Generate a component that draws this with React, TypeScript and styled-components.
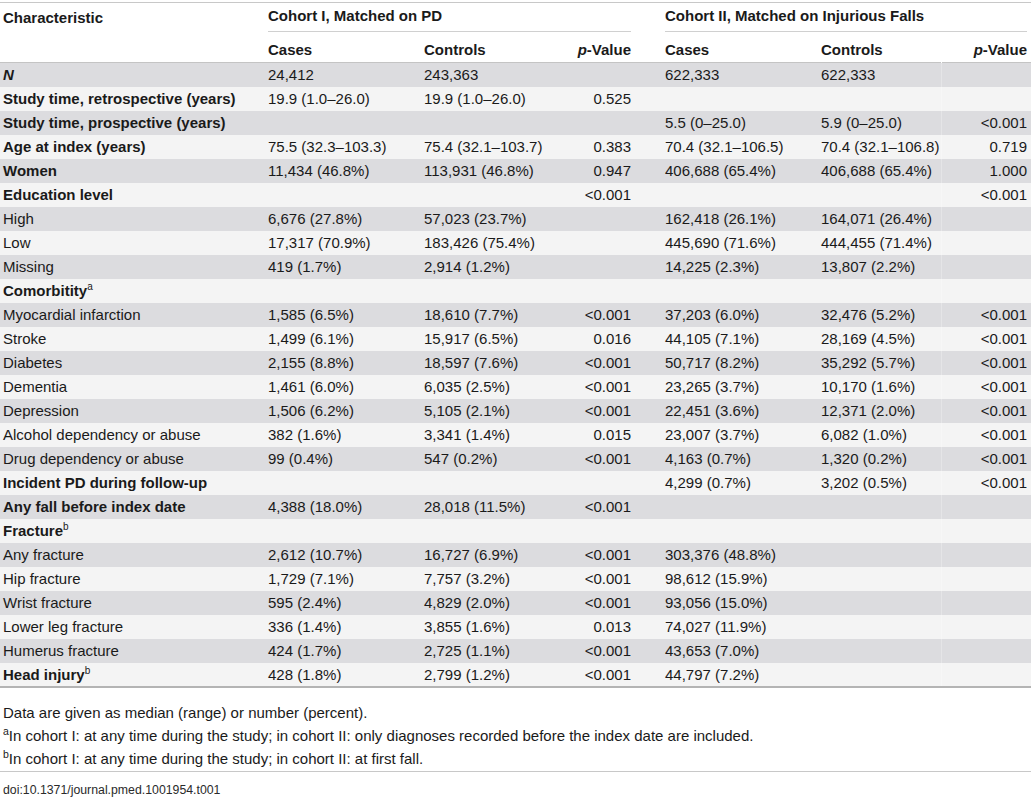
import React from "react";
import styled, { createGlobalStyle } from "styled-components";

type Row = {
  label: string;
  sup?: string;
  bold?: boolean;
  italic?: boolean;
  v: string[];
};

const rows: Row[] = [
  { label: "N", bold: true, italic: true, v: ["24,412", "243,363", "", "622,333", "622,333", ""] },
  { label: "Study time, retrospective (years)", bold: true, v: ["19.9 (1.0–26.0)", "19.9 (1.0–26.0)", "0.525", "", "", ""] },
  { label: "Study time, prospective (years)", bold: true, v: ["", "", "", "5.5 (0–25.0)", "5.9 (0–25.0)", "<0.001"] },
  { label: "Age at index (years)", bold: true, v: ["75.5 (32.3–103.3)", "75.4 (32.1–103.7)", "0.383", "70.4 (32.1–106.5)", "70.4 (32.1–106.8)", "0.719"] },
  { label: "Women", bold: true, v: ["11,434 (46.8%)", "113,931 (46.8%)", "0.947", "406,688 (65.4%)", "406,688 (65.4%)", "1.000"] },
  { label: "Education level", bold: true, v: ["", "", "<0.001", "", "", "<0.001"] },
  { label: "High", v: ["6,676 (27.8%)", "57,023 (23.7%)", "", "162,418 (26.1%)", "164,071 (26.4%)", ""] },
  { label: "Low", v: ["17,317 (70.9%)", "183,426 (75.4%)", "", "445,690 (71.6%)", "444,455 (71.4%)", ""] },
  { label: "Missing", v: ["419 (1.7%)", "2,914 (1.2%)", "", "14,225 (2.3%)", "13,807 (2.2%)", ""] },
  { label: "Comorbitity", sup: "a", bold: true, v: ["", "", "", "", "", ""] },
  { label: "Myocardial infarction", v: ["1,585 (6.5%)", "18,610 (7.7%)", "<0.001", "37,203 (6.0%)", "32,476 (5.2%)", "<0.001"] },
  { label: "Stroke", v: ["1,499 (6.1%)", "15,917 (6.5%)", "0.016", "44,105 (7.1%)", "28,169 (4.5%)", "<0.001"] },
  { label: "Diabetes", v: ["2,155 (8.8%)", "18,597 (7.6%)", "<0.001", "50,717 (8.2%)", "35,292 (5.7%)", "<0.001"] },
  { label: "Dementia", v: ["1,461 (6.0%)", "6,035 (2.5%)", "<0.001", "23,265 (3.7%)", "10,170 (1.6%)", "<0.001"] },
  { label: "Depression", v: ["1,506 (6.2%)", "5,105 (2.1%)", "<0.001", "22,451 (3.6%)", "12,371 (2.0%)", "<0.001"] },
  { label: "Alcohol dependency or abuse", v: ["382 (1.6%)", "3,341 (1.4%)", "0.015", "23,007 (3.7%)", "6,082 (1.0%)", "<0.001"] },
  { label: "Drug dependency or abuse", v: ["99 (0.4%)", "547 (0.2%)", "<0.001", "4,163 (0.7%)", "1,320 (0.2%)", "<0.001"] },
  { label: "Incident PD during follow-up", bold: true, v: ["", "", "", "4,299 (0.7%)", "3,202 (0.5%)", "<0.001"] },
  { label: "Any fall before index date", bold: true, v: ["4,388 (18.0%)", "28,018 (11.5%)", "<0.001", "", "", ""] },
  { label: "Fracture", sup: "b", bold: true, v: ["", "", "", "", "", ""] },
  { label: "Any fracture", v: ["2,612 (10.7%)", "16,727 (6.9%)", "<0.001", "303,376 (48.8%)", "", ""] },
  { label: "Hip fracture", v: ["1,729 (7.1%)", "7,757 (3.2%)", "<0.001", "98,612 (15.9%)", "", ""] },
  { label: "Wrist fracture", v: ["595 (2.4%)", "4,829 (2.0%)", "<0.001", "93,056 (15.0%)", "", ""] },
  { label: "Lower leg fracture", v: ["336 (1.4%)", "3,855 (1.6%)", "0.013", "74,027 (11.9%)", "", ""] },
  { label: "Humerus fracture", v: ["424 (1.7%)", "2,725 (1.1%)", "<0.001", "43,653 (7.0%)", "", ""] },
  { label: "Head injury", sup: "b", bold: true, v: ["428 (1.8%)", "2,799 (1.2%)", "<0.001", "44,797 (7.2%)", "", ""] },
];

const App = () => {
  return (
    <Page>
      <GlobalStyle />
      <Table>
        <colgroup>
          <col style={{ width: 265 }} />
          <col style={{ width: 156 }} />
          <col style={{ width: 139 }} />
          <col style={{ width: 75 }} />
          <col style={{ width: 183 }} />
          <col style={{ width: 123 }} />
          <col style={{ width: 90 }} />
        </colgroup>
        <thead>
          <TopRow>
            <HeadCell>Characteristic</HeadCell>
            <HeadCell colSpan={3} $bottom>
              <SpanTitle>Cohort I, Matched on PD</SpanTitle>
            </HeadCell>
            <HeadCell colSpan={3} $second $bottom>
              <SpanTitle>Cohort II, Matched on Injurious Falls</SpanTitle>
            </HeadCell>
          </TopRow>
          <SubRow>
            <HeadCell />
            <HeadCell>Cases</HeadCell>
            <HeadCell>Controls</HeadCell>
            <HeadCell $right>
              <i>p</i>-Value
            </HeadCell>
            <HeadCell $second>Cases</HeadCell>
            <HeadCell>Controls</HeadCell>
            <HeadCell $right>
              <i>p</i>-Value
            </HeadCell>
          </SubRow>
        </thead>
        <tbody>
          {rows.map((r, i) => (
            <DataRow key={r.label} $odd={i % 2 === 1}>
              <LabelCell $bold={r.bold} $italic={r.italic}>
                {r.label}
                {r.sup && <Sup>{r.sup}</Sup>}
              </LabelCell>
              <Cell>{r.v[0]}</Cell>
              <Cell>{r.v[1]}</Cell>
              <Cell $right>{r.v[2]}</Cell>
              <Cell $second>{r.v[3]}</Cell>
              <Cell>{r.v[4]}</Cell>
              <Cell $right $edge>{r.v[5]}</Cell>
            </DataRow>
          ))}
        </tbody>
      </Table>
      <Notes>
        <Note>Data are given as median (range) or number (percent).</Note>
        <Note>
          <NoteSup>a</NoteSup>In cohort I: at any time during the study; in cohort II: only diagnoses recorded before the index date are included.
        </Note>
        <Note>
          <NoteSup>b</NoteSup>In cohort I: at any time during the study; in cohort II: at first fall.
        </Note>
      </Notes>
      <Doi>doi:10.1371/journal.pmed.1001954.t001</Doi>
    </Page>
  );
};

export default App;

const GlobalStyle = createGlobalStyle`
  body {
    margin: 0;
    background: #ffffff;
    font-family: "Liberation Sans", Arial, sans-serif;
    color: #1a1a1a;
  }
`;

const Page = styled.div`
  width: 1031px;
  padding-top: 2px;
`;

const Table = styled.table`
  width: 1031px;
  table-layout: fixed;
  border-collapse: collapse;
  font-size: 15px;
  border-top: 1px solid #c8c8c8;
  border-bottom: 2px solid #b4b4b4;
`;

const TopRow = styled.tr`
  height: 29px;
`;

const SubRow = styled.tr`
  height: 31px;
  border-bottom: 1px solid #c4c4c4;

  th {
    padding-top: 6px;
  }
`;

const HeadCell = styled.th<{ $right?: boolean; $second?: boolean; $bottom?: boolean }>`
  padding: 0 4px 0 ${({ $second }) => ($second ? "30px" : "3px")};
  text-align: ${({ $right }) => ($right ? "right" : "left")};
  font-weight: bold;
  vertical-align: ${({ $bottom }) => ($bottom ? "bottom" : "middle")};
  white-space: nowrap;
`;

const SpanTitle = styled.div`
  padding: 0 0 7px;
  border-bottom: 1px solid #d0d0d0;
`;

const DataRow = styled.tr<{ $odd: boolean }>`
  height: 24px;
  background: ${({ $odd }) => ($odd ? "#f4f4f4" : "#dcdcdf")};
`;

const Cell = styled.td<{ $right?: boolean; $second?: boolean; $edge?: boolean }>`
  padding: 0 4px 0 ${({ $second }) => ($second ? "30px" : "3px")};
  text-align: ${({ $right }) => ($right ? "right" : "left")};
  white-space: nowrap;
  vertical-align: middle;
  border-left: ${({ $edge }) => ($edge ? "1px solid rgba(255,255,255,0.25)" : "none")};
`;

const LabelCell = styled(Cell)<{ $bold?: boolean; $italic?: boolean }>`
  font-weight: ${({ $bold }) => ($bold ? "bold" : "normal")};
  font-style: ${({ $italic }) => ($italic ? "italic" : "normal")};
`;

const Sup = styled.sup`
  font-size: 10px;
  font-weight: normal;
  vertical-align: 6px;
  line-height: 0;
`;

const NoteSup = styled(Sup)`
  font-size: 10.5px;
`;

const Notes = styled.div`
  padding: 13px 3px 1px;
  font-size: 15px;
  border-bottom: 1px solid #c8c8c8;
`;

const Note = styled.p`
  margin: 0;
  line-height: 23px;
`;

const Doi = styled.div`
  padding: 11px 3px 0;
  font-size: 12.3px;
  color: #2a2a2a;
`;
